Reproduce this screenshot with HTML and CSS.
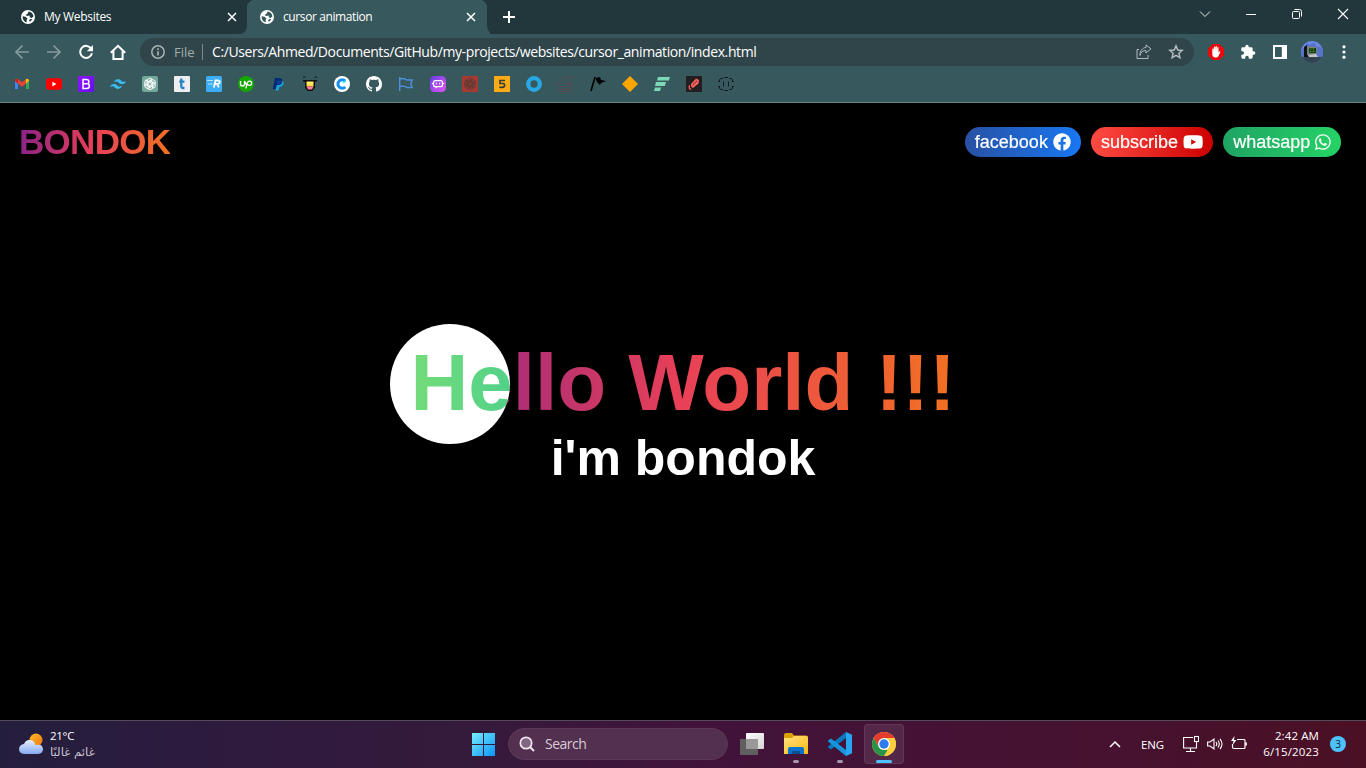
FILE: index.html
```html
<!DOCTYPE html>
<html lang="en">
<head>
<meta charset="utf-8">
<title>cursor animation</title>
<link rel="stylesheet" href="styles.css">
</head>
<body>
<svg class="defs" width="0" height="0">
  <symbol id="globe" viewBox="0 0 14 14"><circle cx="7" cy="7" r="7" fill="#fff"/><path d="M1.6 6.200 L4.500 6.800 L6.500 8.600 L5.600 10 L5.800 12.300 C3 11.800 1.400 9.400 1.600 6.200 Z M7.600 1.600 C10.200 1.800 12.200 4 12.400 6.400 L10.600 8 L8.800 7.200 L8.600 5.600 L6.200 6 L4.600 5 L6.600 3.800 Z M9.200 9 L11.400 9.200 L9 11.800 L8 10.600 Z"/></symbol>
  <symbol id="x" viewBox="0 0 10 10"><path d="M1 1 L9 9 M9 1 L1 9" fill="none" stroke="#fff" stroke-width="1.5"/></symbol>
  <symbol id="knot" viewBox="0 0 16 16"><g fill="none" stroke-width="0.9"><path id="strand" d="M5.300 9.600V5.200Q5.400 2.400 8 2.300Q9.300 2.300 10.200 3.200L6.700 5.300V8"/><use href="#strand" transform="rotate(60 8 8)"/><use href="#strand" transform="rotate(120 8 8)"/><use href="#strand" transform="rotate(180 8 8)"/><use href="#strand" transform="rotate(240 8 8)"/><use href="#strand" transform="rotate(300 8 8)"/></g></symbol>
</svg>

<div class="tabstrip">
  <div class="tab"><svg class="globe inactive"><use href="#globe"/></svg><span class="tab-title t1">My Websites</span><svg class="tab-close"><use href="#x"/></svg></div>
  <div class="tab active"><svg class="globe"><use href="#globe"/></svg><span class="tab-title t2">cursor animation</span><svg class="tab-close"><use href="#x"/></svg></div>
  <svg class="plus" viewBox="0 0 12 12"><path d="M6 0V12M0 6H12" stroke="#fff" stroke-width="2"/></svg>
  <div class="window-buttons">
    <svg viewBox="0 0 12 12"><path d="M1 3.5 L6 8.5 L11 3.5" fill="none" stroke="#e5e9e9"/></svg>
    <svg viewBox="0 0 12 12"><path d="M1 6.5H11" stroke="#fff"/></svg>
    <svg viewBox="0 0 12 12"><g fill="none" stroke="#fff"><rect x="1.5" y="3.5" width="7" height="7" rx="1"/><path d="M3.5 1.5H8.5Q10.5 1.5 10.5 3.5V8.5"/></g></svg>
    <svg viewBox="0 0 12 12"><path d="M1 1L11 11M11 1L1 11" stroke="#fff" stroke-width="1.1"/></svg>
  </div>
</div>

<div class="toolbar">
  <svg viewBox="0 0 16 16" class="ti dim"><path d="M15 8H2M8.5 1.5L2 8L8.5 14.5"/></svg>
  <svg viewBox="0 0 16 16" class="ti dim"><path d="M1 8H14M7.5 1.5L14 8L7.5 14.5"/></svg>
  <svg viewBox="0 0 16 16" class="ti"><path d="M13.2 4.6A6 6 0 1 0 14 9.3"/><path d="M15 1V7.2H8.8Z" fill="#fff" stroke="none"/></svg>
  <svg viewBox="0 0 16 16" class="ti home"><path d="M0.8 8.8L8 1.8L15.2 8.8M3.4 7V15H12.6V7"/></svg>
  <div class="omnibox">
    <svg viewBox="0 0 14 14" class="info"><circle cx="7" cy="7" r="6.2" fill="none" stroke="#a9b3b5" stroke-width="1.5"/><path d="M7 6.2V10.6M7 3.2V4.9" stroke="#a9b3b5" stroke-width="1.7"/></svg>
    <span class="scheme">File</span><i class="sep"></i><span class="url">C:/Users/Ahmed/Documents/GitHub/my-projects/websites/cursor_animation/index.html</span>
    <svg viewBox="0 0 16 16" class="oi share"><path d="M3 5.5H1V14.5H12V11M4 11.5C4.5 8 7 6.5 10 6.5V9L15 4.8L10 1V3.5C6.500 3.800 4 6.500 4 11.5Z"/></svg>
    <svg viewBox="0 0 16 16" class="oi"><path d="M8 1.900L9.800 6L14.200 6.400L10.900 9.300L11.900 13.700L8 11.400L4.100 13.700L5.100 9.300L1.800 6.400L6.200 6Z" stroke-width="1.500"/></svg>
  </div>
  <div class="extensions">
    <svg viewBox="0 0 16 16"><path d="M4.700 0H11.300L16 4.700V11.300L11.300 16H4.700L0 11.300V4.700Z" fill="#e8080d"/><path d="M4.300 8.600V5Q5 4 5.700 5V7.500L5.900 3Q6.600 2 7.200 3V7L7.500 2.400Q8.300 1.500 8.900 2.400V7L9.300 3.400Q10 2.600 10.500 3.400V9L11.200 7.500Q12.500 7 12.300 8L10.500 12Q9.600 13.800 7.600 13.600Q4.300 13.400 4.300 10Z" fill="#fff"/></svg>
    <svg viewBox="0 0 24 24"><path fill="#fff" d="M20.500 11H19V7c0-1.100-.9-2-2-2h-4V3.500a2.500 2.500 0 0 0-5 0V5H4c-1.100 0-2 .9-2 2v3.800h1.500a2.700 2.700 0 0 1 0 5.400H2V20c0 1.100.9 2 2 2h3.800v-1.500a2.700 2.700 0 0 1 5.400 0V22H17c1.100 0 2-.9 2-2v-4h1.500a2.500 2.500 0 0 0 0-5z"/></svg>
    <svg viewBox="0 0 16 16"><path fill="#fff" fill-rule="evenodd" d="M1 1H15V15H1ZM3 3V13H9.800V3Z"/></svg>
    <svg viewBox="0 0 22 22" class="avatar"><clipPath id="av"><circle cx="11" cy="11" r="11"/></clipPath><g clip-path="url(#av)"><path d="M0 0H22V22H0Z" fill="#6b88e8"/><path d="M0 9L4 6L6 2L9 4L13 1L15 5L22 7V16H0Z" fill="#5673cc"/><path d="M0 16H22V22H0Z" fill="#30434e"/><path d="M3 6L6 4V13L8 16H3Z" fill="#101414"/><path d="M6 5L16 6V14H6Z" fill="#777f80"/><path d="M8 7H15V12H8Z" fill="#183719"/><path d="M8.500 8H14.500M8.500 10.500H14.500" stroke="#45a321" stroke-dasharray="2 1"/><path d="M7 14L15 13L17 16H8Z" fill="#c2c7c5"/></g></svg>
    <svg viewBox="0 0 16 16"><g fill="#fff"><circle cx="8" cy="2.800" r="1.600"/><circle cx="8" cy="8" r="1.600"/><circle cx="8" cy="13.200" r="1.600"/></g></svg>
  </div>
</div>

<div class="bookmarks">
  <svg viewBox="0 0 16 16"><path d="M1 4V13H4V7Z" fill="#4285f4"/><path d="M12 7V13H15V4Z" fill="#34a853"/><path d="M1 3L4 3L8 6.500L12 3V7.500L8 10.800L4 7.500L1 5Z" fill="#ea4335"/><path d="M12 3Q15 2 15 5L12 7.500Z" fill="#fbbc04"/><path d="M1 5Q0.900 2.500 3 2.800L4 3.400V7.500Z" fill="#c5221f"/></svg>
  <svg viewBox="0 0 16 16"><rect y="2.300" width="16" height="11.500" rx="2.800" fill="#f00"/><path d="M6.400 5.700V10.400L10.400 8Z" fill="#fff"/></svg>
  <svg viewBox="0 0 16 16"><linearGradient id="bs" x2="1" y2="1"><stop stop-color="#9013fe"/><stop offset="1" stop-color="#6610f2"/></linearGradient><rect width="16" height="16" rx="1" fill="url(#bs)"/><path d="M5 3.500V12.500H8.600Q11.400 12.500 11.400 10Q11.400 8 9.400 7.700Q10.900 7.300 10.900 5.700Q10.900 3.500 8.300 3.500ZM5 7.700H9" fill="none" stroke="#fff" stroke-width="1.500"/></svg>
  <svg viewBox="0 0 16 16"><path fill="#38bdf8" d="M4 6.500Q5 3.200 8 3.200C11 3.200 11.400 5.500 13 5.800Q14.500 6.100 16 4.900Q15 8.200 12 8.200C9 8.200 8.600 5.900 7 5.600Q5.500 5.300 4 6.500ZM0 11.200Q1 7.900 4 7.900C7 7.900 7.400 10.200 9 10.500Q10.500 10.800 12 9.600Q11 12.900 8 12.900C5 12.900 4.600 10.600 3 10.300Q1.500 10 0 11.200Z"/></svg>
  <svg viewBox="0 0 16 16"><rect width="16" height="16" rx="2" fill="#74a89a"/><use href="#knot" stroke="#fff"/></svg>
  <svg viewBox="0 0 16 16"><rect width="16" height="16" rx="1" fill="#eeeef2"/><path d="M7.300 2.500V10Q7.300 12 9 12H10.500M5.300 5.600H10.500" fill="none" stroke="#2483c5" stroke-width="2.300"/></svg>
  <svg viewBox="0 0 16 16"><rect width="16" height="16" rx="1.500" fill="#3dadf5"/><path d="M1 4.500H7M2 8H6.500" stroke="#b8e4ff"/><path d="M7.800 11.500L9.500 4.500H12.500Q14.500 5 13.500 7Q12.900 8 9 8M11.200 8L12.800 11.500" fill="none" stroke="#fff" stroke-width="1.800"/></svg>
  <svg viewBox="0 0 16 16"><circle cx="8" cy="8" r="8" fill="#14a800"/><path d="M2.500 5V8Q2.500 10 4.500 10Q6.500 10 6.500 8V5L8.500 9M7.800 12.500L9.300 7Q10 5 12 5.200Q14 5.800 13.500 8Q12.500 10.500 9.300 8.500" fill="none" stroke="#fff" stroke-width="1.300"/></svg>
  <svg viewBox="0 0 16 16"><path d="M5 2H10Q13 2.400 12.200 6Q11 10 7.500 9.500L6.500 13H2.800Z" fill="#002b78"/><path d="M12.300 5Q14.300 6 13.300 8.500Q12.300 11 9.300 11L8.500 14.500H5.500L6.800 9H9Q12 8.800 12.300 5Z" fill="#16a2df"/><path d="M6.800 7.800Q12 8.500 12.200 5Q11 4.600 7.500 4.700Z" fill="#0f3f91"/></svg>
  <svg viewBox="0 0 16 16"><path d="M1 4H15V5.200L13 6V11.500L10.500 15H5.500L3 11.500V6L1 5.200Z" fill="#111"/><path d="M4.500 5.500H11.500V8H4.500Z" fill="#fff06b"/><path d="M4.500 8H11.500V10.500H4.500Z" fill="#ffd84b"/><path d="M4.500 10.500H11.500L10 13.500H6Z" fill="#ff7f9a"/><path d="M1 1.500Q2 0 3.500 1.500M12.500 1.500Q14 0 15 1.500" fill="none" stroke="#111"/></svg>
  <svg viewBox="0 0 16 16"><circle cx="8" cy="8" r="8" fill="#fff"/><path d="M11.300 5A4.300 4.300 0 1 0 11.300 11" fill="none" stroke="#168ff5" stroke-width="3"/><path d="M9 6.500L11.500 5" stroke="#1edcf5" stroke-width="2"/></svg>
  <svg viewBox="0 0 16 16"><path fill="#fff" d="M8 0C3.580 0 0 3.580 0 8c0 3.540 2.290 6.530 5.470 7.590.4.070.55-.17.55-.38 0-.19-.01-.82-.01-1.490-2.010.37-2.530-.49-2.690-.94-.09-.23-.48-.94-.82-1.130-.28-.15-.68-.52-.01-.53.63-.01 1.080.58 1.230.82.72 1.210 1.870.87 2.330.66.07-.52.28-.87.51-1.070-1.780-.2-3.640-.89-3.640-3.950 0-.87.31-1.590.82-2.150-.08-.2-.36-1.020.08-2.120 0 0 .67-.21 2.200.82.64-.18 1.320-.27 2-.27s1.360.09 2 .27c1.530-1.040 2.200-.82 2.200-.82.44 1.100.16 1.920.08 2.120.51.56.82 1.270.82 2.150 0 3.070-1.870 3.750-3.650 3.950.29.25.54.73.54 1.480 0 1.070-.01 1.930-.01 2.200 0 .21.15.46.55.38A8.010 8.010 0 0 0 16 8c0-4.420-3.580-8-8-8Z"/></svg>
  <svg viewBox="0 0 16 16"><path d="M1.700 1V15M1.700 2.700H7Q7.500 4 9 4H14.200L12.700 7.500L14.200 11.500H8.500Q7.500 10.200 6 10.200H1.700" fill="none" stroke="#4b8fdb" stroke-width="1.500"/></svg>
  <svg viewBox="0 0 16 16"><linearGradient id="po" x2="1" y2="1"><stop stop-color="#653ee8"/><stop offset="1" stop-color="#e654f2"/></linearGradient><rect width="16" height="16" rx="4.500" fill="url(#po)"/><rect x="3.500" y="4.700" width="9" height="6" rx="2" fill="none" stroke="#fff" stroke-width="1.300"/><path d="M5.500 10.500V12.800L8 10.500Z" fill="#fff"/><path d="M3 7.500H1.800M13 7.500H14.200M6.300 6.700V8.500M9.700 6.700V8.500" stroke="#fff"/></svg>
  <svg viewBox="0 0 16 16"><path d="M0 0H16V16H0Z" fill="#a63a30"/><use href="#knot" stroke="#5c3b37"/></svg>
  <svg viewBox="0 0 16 16"><path d="M0 0H16V16H0Z" fill="#fbab15"/><path d="M11 4.500H6V7.500H9Q11 7.700 10.500 10Q10 11.900 5.300 11.200" fill="none" stroke="#3d3c3d" stroke-width="1.700"/></svg>
  <svg viewBox="0 0 16 16"><circle cx="8" cy="8" r="5.800" fill="none" stroke="#29a8e5" stroke-width="4.300"/></svg>
  <svg viewBox="0 0 16 16"><path d="M1.500 10.500V7Q3 2 8 2L14 0.500L10 4.500Q14 6 14 10.500M6 7.500H12M1 10.500H6M8 10.500H14M1 13H14M1 15.500H14" fill="none" stroke="#594b50"/></svg>
  <svg viewBox="0 0 16 16"><path d="M5 1L1 15" stroke="#000" stroke-width="1.600"/><path d="M5.500 2L10 1L11 4L16 5L11 7L10 9L7 6Z" fill="#000"/></svg>
  <svg viewBox="0 0 16 16"><path d="M8 0L16 8L8 16L0 8Z" fill="#ffa500"/></svg>
  <svg viewBox="0 0 16 16"><path d="M4 1H16L14.800 4.500H3ZM2 6H12L10.800 10H1ZM1 11.500H7L6 15H0Z" fill="#7cd9b8"/></svg>
  <svg viewBox="0 0 16 16"><path d="M0 0H16V16H0Z" fill="#231f20"/><path d="M5 8L10 2.500L13 4L12.500 7.500L7 12Q4.500 11 5 8ZM2.500 10L4 9L4 12L6 13.500H3Z" fill="#ff6058"/><path d="M6.500 9L11 5" stroke="#231f20" stroke-width=".7"/></svg>
  <svg viewBox="0 0 16 16"><path d="M1.500 5V3.500L3 2.500H5M6 1.500H10M11 2.500H13L14.500 3.500V5M1.500 11V12.500L3 13.500H5M6 14.500H10M11 13.500H13L14.500 12.500V11M5.500 5.500V10.500M10.500 5.500V10.500M0 5.500H2M14 5.500H16M0 10.500H2M14 10.500H16" fill="none" stroke="#101b1d"/></svg>
</div>

<main class="page">
  <header class="site-header">
    <div class="logo">BONDOK</div>
    <nav class="links">
      <a class="pill facebook">facebook <svg width="18" height="18" viewBox="0 0 512 512"><path fill="#fff" d="M504 256C504 119 393 8 256 8S8 119 8 256c0 123.780 90.690 226.380 209.250 245V327.690h-63V256h63v-54.640c0-62.150 37-96.480 93.670-96.480 27.140 0 55.520 4.840 55.520 4.840v61h-31.280c-30.800 0-40.410 19.120-40.410 38.730V256h68.780l-11 71.690h-57.780V501C413.310 482.380 504 379.780 504 256z"/></svg></a>
      <a class="pill subscribe">subscribe <svg width="20.250" height="18" viewBox="0 0 576 512"><path fill="#fff" d="M549.655 124.083c-6.281-23.650-24.787-42.276-48.284-48.597C458.781 64 288 64 288 64S117.220 64 74.629 75.486c-23.497 6.322-42.003 24.947-48.284 48.597-11.412 42.867-11.412 132.305-11.412 132.305s0 89.438 11.412 132.305c6.281 23.650 24.787 41.500 48.284 47.821C117.220 448 288 448 288 448s170.780 0 213.371-11.486c23.497-6.321 42.003-24.171 48.284-47.821 11.412-42.867 11.412-132.305 11.412-132.305s0-89.438-11.412-132.305zm-317.510 213.508V175.185l142.739 81.205-142.739 81.201z"/></svg></a>
      <a class="pill whatsapp">whatsapp <svg width="15.750" height="18" viewBox="0 0 448 512"><path fill="#fff" d="M380.900 97.100C339 55.100 283.200 32 223.900 32c-122.400 0-222 99.600-222 222 0 39.100 10.200 77.300 29.600 111L0 480l117.700-30.900c32.400 17.700 68.900 27 106.100 27h.1c122.300 0 224.100-99.600 224.100-222 0-59.300-25.200-115-67.100-157zm-157 341.600c-33.200 0-65.700-8.900-94-25.700l-6.700-4-69.800 18.300L72 359.200l-4.400-7c-18.500-29.400-28.200-63.300-28.200-98.200 0-101.700 82.800-184.500 184.600-184.500 49.300 0 95.600 19.200 130.400 54.100 34.800 34.900 56.200 81.200 56.100 130.500 0 101.800-84.900 184.600-186.600 184.600zm101.200-138.200c-5.500-2.800-32.800-16.200-37.900-18-5.100-1.900-8.800-2.800-12.500 2.800-3.700 5.600-14.300 18-17.600 21.800-3.200 3.700-6.500 4.200-12 1.400-32.600-16.300-54-29.100-75.500-66-5.700-9.800 5.700-9.100 16.300-30.300 1.800-3.700.9-6.900-.5-9.700-1.400-2.800-12.500-30.100-17.100-41.200-4.500-10.800-9.100-9.300-12.500-9.500-3.200-.2-6.900-.2-10.600-.2-3.700 0-9.700 1.400-14.800 6.900-5.100 5.600-19.400 19-19.400 46.300 0 27.300 19.900 53.700 22.600 57.400 2.800 3.700 39.100 59.700 94.800 83.800 35.200 15.200 49 16.500 66.600 13.900 10.700-1.600 32.800-13.400 37.400-26.400 4.600-13 4.600-24.100 3.200-26.400-1.300-2.500-5-3.900-10.500-6.600z"/></svg></a>
    </nav>
  </header>
  <section class="hero">
    <h1>Hello World !!!</h1>
    <h2>i'm bondok</h2>
  </section>
  <div class="cursor"></div>
</main>

<footer class="taskbar">
  <div class="weather">
    <svg width="26" height="22" viewBox="0 0 26 22"><linearGradient id="cl" x2="0" y2="1"><stop stop-color="#e6efff"/><stop offset="1" stop-color="#86aaf0"/></linearGradient><linearGradient id="sn" x2="1" y2="1"><stop stop-color="#ffbd28"/><stop offset="1" stop-color="#ee7410"/></linearGradient><circle cx="18" cy="7" r="6.500" fill="url(#sn)"/><path d="M6 21Q1 20.500 1 15.800Q1.500 11.500 6 11Q8 6 13 7.200Q16.500 8 17.500 12Q24.500 10.500 25 16Q25 20.500 20 21Z" fill="url(#cl)"/></svg>
    <div><div class="temp">21°C</div><div class="cond" dir="rtl">غائم غالبًا</div></div>
  </div>
  <div class="apps">
    <div class="app"><svg width="24" height="24" viewBox="0 0 24 24"><linearGradient id="w" x2="24" y2="24" gradientUnits="userSpaceOnUse"><stop stop-color="#79efff"/><stop offset="1" stop-color="#0992fb"/></linearGradient><path d="M0 1H11V12H0ZM12 1H23V12H12ZM0 13H11V24H0ZM12 13H23V24H12Z" fill="url(#w)"/></svg></div>
    <div class="search"><svg width="16" height="16" viewBox="0 0 16 16"><circle cx="7" cy="7" r="5.700" fill="#806680" stroke="#eee5ee" stroke-width="1.700"/><path d="M11 11L15 15" stroke="#eee5ee" stroke-width="1.900"/></svg><span>Search</span></div>
    <div class="app"><svg width="24" height="24" viewBox="0 0 24 24"><linearGradient id="tv" x2="1" y2="1"><stop stop-color="#fff"/><stop offset="1" stop-color="#d5d5d5"/></linearGradient><rect x="6" y="1" width="18" height="16" rx="1" fill="url(#tv)"/><rect y="7" width="18" height="16" rx="1" fill="#5f5f5f"/><path d="M6 7H18V17H6Z" fill="#999"/></svg></div>
    <div class="app"><svg width="24" height="24" viewBox="0 0 24 24"><linearGradient id="fo" x2="1" y2="1"><stop stop-color="#ffe17e"/><stop offset="1" stop-color="#ffb914"/></linearGradient><path d="M0 8V3Q0 1 2 1H8L10 3.500H22Q24 3.500 24 5.500V8Z" fill="#dca006"/><path d="M0 6H8L10 4H22Q24 4 24 6V22H0Z" fill="url(#fo)"/><path d="M4 22V17Q4 15 6 15H18Q20 15 20 17V22Z" fill="#0872cf"/><path d="M8 22V20Q8 19 9 19H15Q16 19 16 20V22Z" fill="#0c4f91"/></svg><i class="dot"></i></div>
    <div class="app"><svg width="24" height="24" viewBox="0 0 24 24"><path d="M18 0L24 2.800V21.200L18 24Z" fill="#27a5f2"/><path d="M18 0V6L3 17.500L0 15.500V14.500Z" fill="#0879bd"/><path d="M0 8.500L3 6.500L18 18V24L0 9.500Z" fill="#1695df"/></svg><i class="dot"></i></div>
    <div class="app current"><svg width="24" height="24" viewBox="0 0 24 24"><circle cx="12" cy="12" r="12" fill="#ffcd40"/><path d="M1.610 6A12 12 0 0 1 22.390 6H12L6.800 15Z" fill="#e33b2e"/><path d="M1.610 6L6.800 15Q9 18 12 18H17.200L12 24A12 12 0 0 1 1.610 6Z" fill="#269447"/><path d="M22.390 6A12 12 0 0 1 12 24L17.200 15L17.200 9L12 6Z" fill="#ffcd40"/><circle cx="12" cy="12" r="6" fill="#fff"/><circle cx="12" cy="12" r="4.700" fill="#2f7cf0"/></svg><i class="dot wide"></i></div>
  </div>
  <div class="tray">
    <svg class="up" width="12" height="8" viewBox="0 0 12 8"><path d="M1 7L6 2L11 7" fill="none" stroke="#fff" stroke-width="1.500"/></svg>
    <span class="lang">ENG</span>
    <svg width="16" height="18" viewBox="0 0 16 18"><g fill="none" stroke="#fff" stroke-width="1.100"><path d="M10 2.500H0.600V13H13.500V7M7.500 13V16M3 16.500H12"/><rect x="11.500" y="1.500" width="4" height="5"/></g></svg>
    <svg width="16" height="16" viewBox="0 0 16 16"><path d="M0.600 6V10H3L7 13V3L3 6ZM9 6Q10.500 8 9 10M11 4.500Q13.500 8 11 11.500M13 2.800Q17 8 13 13.200" fill="none" stroke="#fff" stroke-width="1.100"/></svg>
    <svg width="16" height="16" viewBox="0 0 16 16"><path d="M6 3.500H13Q14 3.500 14 4.500V11.500Q14 12.500 13 12.500H3Q1.500 12.500 1.500 11V8M15.300 6.500V9.500" fill="none" stroke="#fff" stroke-width="1.200"/><path d="M3.500 0L0 5H2.500L1.500 9L5.500 4H3Z" fill="#fff"/></svg>
    <div class="clock"><div class="time">2:42 AM</div><div class="date">6/15/2023</div></div>
    <span class="badge">3</span>
  </div>
</footer>
</body>
</html>
```
FILE: styles.css
```css
* { box-sizing: border-box; }
body {
  margin: 0;
  width: 1366px;
  height: 768px;
  overflow: hidden;
  background: #000;
  color: #fff;
  font-family: "Open Sans", "Noto Sans", sans-serif;
}
svg { display: block; flex: none; }
.defs { position: absolute; }

/* Tab strip */
.tabstrip {
  display: flex;
  align-items: center;
  height: 34px;
  background: linear-gradient(to right, #37585c 490px, #21373b 490px);
}
.tab {
  display: flex;
  align-items: center;
  height: 34px;
  width: 247px;
  padding: 0 10px 0 21px;
  background: #21373b;
  border-radius: 0 0 8px 0;
}
.tab.active {
  width: 240px;
  padding: 0 11px 0 13px;
  background: radial-gradient(circle at 8px 8px, #37585c 8px, #21373b 8.5px) 0 0 / 8px 8px no-repeat,
    radial-gradient(circle at 0 8px, #37585c 8px, #21373b 8.5px) 100% 0 / 8px 8px no-repeat,
    linear-gradient(#37585c, #37585c) 8px 0 / 224px 8px no-repeat,
    linear-gradient(#37585c, #37585c) 0 8px / 240px 26px no-repeat;
}
.globe { width: 14px; height: 14px; fill: #37585c; }
.globe.inactive { fill: #21373b; }
.tab-title { flex: 1; margin-left: 9px; padding-bottom: 1px; font-size: 12px; white-space: nowrap; }
.t1 { letter-spacing: -0.3px; }
.t2 { letter-spacing: -0.4px; }
.tab-close { width: 10px; height: 10px; }
.plus {
  box-sizing: content-box;
  width: 12px;
  height: 12px;
  padding: 11px 16px;
  background: #21373b;
  border-bottom-left-radius: 8px;
}
.window-buttons {
  display: flex;
  gap: 34px;
  margin: 0 17px 6px auto;
}
.window-buttons svg { width: 12px; height: 12px; }

/* Toolbar */
.toolbar {
  display: flex;
  align-items: center;
  height: 36px;
  padding-left: 14px;
  background: #37585c;
}
.ti { width: 16px; height: 16px; margin-right: 16px; fill: none; stroke: #fff; stroke-width: 2; }
.ti.dim { stroke: #879b9d; stroke-width: 1.7; }
.ti.home { margin-right: 14px; }
.omnibox {
  display: flex;
  align-items: center;
  width: 1054px;
  height: 28px;
  padding: 0 10px 0 11px;
  border-radius: 14px;
  background: #2f454a;
  white-space: nowrap;
}
.info { width: 14px; height: 14px; }
.scheme { margin-left: 9px; width: 28px; color: #a2adaf; font-size: 13px; }
.sep { width: 1px; height: 16px; margin-right: 9px; background: #7d8b8e; }
.url { padding-bottom: 1px; font-size: 14px; letter-spacing: -0.4px; }
.oi { width: 16px; height: 16px; fill: none; stroke: #b4bcbe; }
.oi.share { margin: 0 16px 0 auto; }
.extensions { display: flex; align-items: center; gap: 16px; margin-left: 14px; }
.extensions svg { width: 16px; height: 16px; }
.extensions .avatar { width: 22px; height: 22px; margin: 0 -3px; }

/* Bookmarks */
.bookmarks {
  display: flex;
  gap: 16px;
  height: 33px;
  padding: 6px 0 0 14px;
  background: #37585c;
  border-bottom: 1px solid #6b8386;
}
.bookmarks > svg { width: 16px; height: 16px; }

/* Page */
.page {
  position: relative;
  height: 617px;
  background: #000;
  font-family: "Liberation Sans", Arial, sans-serif;
  isolation: isolate;
}
.site-header {
  display: flex;
  align-items: center;
  justify-content: space-between;
  height: 78px;
  padding: 0 25px 0 19px;
}
.logo, h1 {
  background: linear-gradient(to right, #8a2387, #e94057, #f27121);
  -webkit-background-clip: text;
  background-clip: text;
  color: transparent;
}
.logo { font-size: 35px; font-weight: bold; letter-spacing: -0.7px; }
.links { display: flex; gap: 10px; }
.pill {
  display: flex;
  align-items: center;
  gap: 5px;
  height: 30px;
  padding: 0 10px;
  border-radius: 15px;
  font-size: 18px;
  -webkit-text-stroke: 0.2px #fff;
}
.facebook { background: linear-gradient(to right, #2851a3, #1877f2); }
.subscribe { background: linear-gradient(to right, #ff4b43, #cc0000); }
.whatsapp { background: linear-gradient(to right, #1fa463, #25d366); }
.hero {
  display: flex;
  flex-direction: column;
  align-items: center;
  justify-content: center;
  height: 539px;
  padding-bottom: 78px;
}
h1, h2 { margin: 0; white-space: nowrap; }
h1 { font-size: 80px; line-height: 92px; }
h2 { font-size: 50px; line-height: 58px; }
.cursor {
  position: absolute;
  left: 390px;
  top: 221px;
  width: 120px;
  height: 120px;
  border-radius: 50%;
  background: #fff;
  mix-blend-mode: difference;
}

/* Taskbar */
.taskbar {
  display: flex;
  align-items: center;
  height: 48px;
  padding-bottom: 1px;
  border-top: 1px solid #544a59;
  background: linear-gradient(to right, #241e3d, #2d1b3e 15%, #351a3b 35%, #42133b 52%, #46122f 82%, #4b1024);
}
.weather { display: flex; align-items: center; gap: 6px; width: 464px; padding-left: 18px; font-size: 11px; line-height: 16px; }
.temp { font-size: 11.5px; letter-spacing: -0.3px; }
.cond { color: #c8c3cf; font-family: "DejaVu Sans", sans-serif; font-size: 11.7px; }
.apps { display: flex; gap: 4px; align-items: center; }
.app {
  position: relative;
  display: flex;
  align-items: center;
  justify-content: center;
  width: 40px;
  height: 40px;
  border-radius: 4px;
}
.app.current { background: rgba(255, 255, 255, .09); border: 1px solid rgba(255, 255, 255, .08); }
.dot { position: absolute; bottom: 1px; left: 17px; width: 6px; height: 3px; border-radius: 2px; background: #a795a8; }
.dot.wide { bottom: 0; left: 11px; width: 16px; background: #4cc2ff; }
.search {
  display: flex;
  align-items: center;
  gap: 10px;
  width: 220px;
  height: 32px;
  padding-left: 10px;
  border-radius: 16px;
  background: #53304f;
  border: 1px solid #5c3957;
  color: #d8cbd7;
  font-size: 14px;
  letter-spacing: -0.5px;
}
.search span { padding-bottom: 1px; }
.tray { display: flex; align-items: center; margin-left: auto; padding-right: 20px; font-size: 11.5px; }
.up { margin-right: 20px; }
.lang { width: 24px; margin-right: 18px; letter-spacing: -.1px; }
.tray svg + svg { margin-left: 8px; }
.clock { width: 72px; text-align: right; line-height: 16px; }
.time { letter-spacing: .1px; }
.date { letter-spacing: .15px; }
.badge {
  width: 16px;
  height: 16px;
  margin-left: 11px;
  border-radius: 50%;
  background: #4cc2ff;
  color: #15242e;
  font-size: 10px;
  line-height: 16px;
  text-align: center;
}
```
